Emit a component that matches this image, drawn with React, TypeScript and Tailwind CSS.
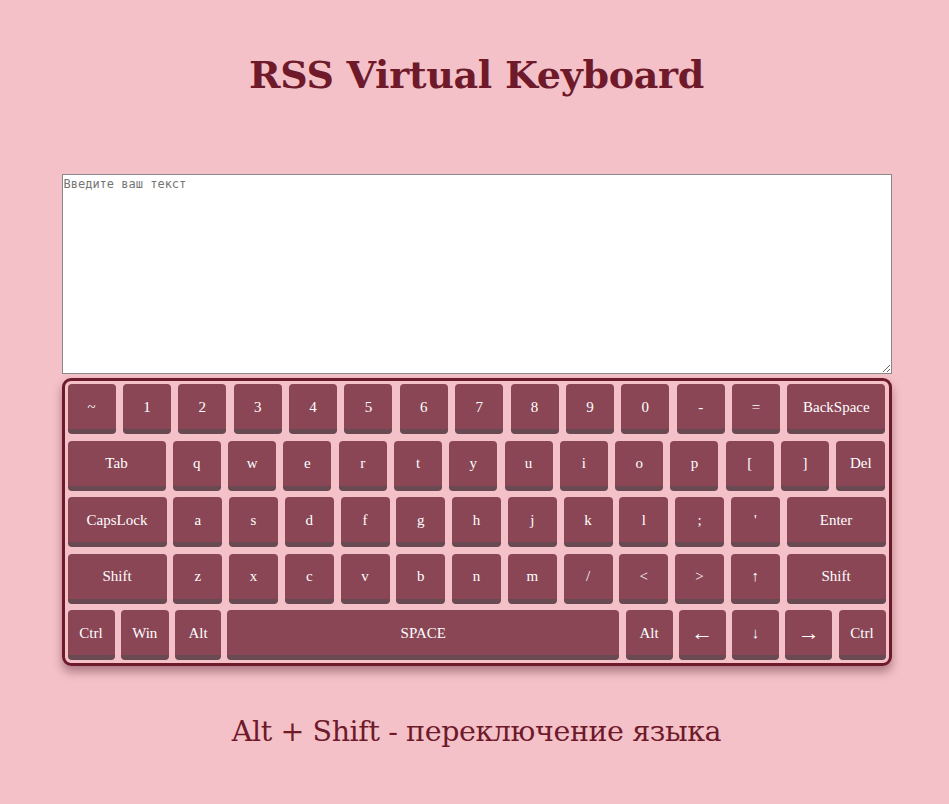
import React from 'react';

type K = { label: string; w: number };

const k = (label: string, w = 48): K => ({ label, w });

const rows: K[][] = [
  [k('~'), k('1'), k('2'), k('3'), k('4'), k('5'), k('6'), k('7'), k('8'), k('9'), k('0'), k('-'), k('='), k('BackSpace', 98)],
  [k('Tab', 98), k('q'), k('w'), k('e'), k('r'), k('t'), k('y'), k('u'), k('i'), k('o'), k('p'), k('['), k(']'), k('Del', 49)],
  [k('CapsLock', 99), k('a', 49), k('s', 49), k('d', 49), k('f', 49), k('g', 49), k('h', 49), k('j', 49), k('k', 49), k('l', 49), k(';', 49), k("'", 49), k('Enter', 99)],
  [k('Shift', 99), k('z', 49), k('x', 49), k('c', 49), k('v', 49), k('b', 49), k('n', 49), k('m', 49), k('/', 49), k('<', 49), k('>', 49), k('↑', 49), k('Shift', 99)],
  [k('Ctrl', 47), k('Win', 48), k('Alt', 46), k('SPACE', 392), k('Alt', 47), k('←', 47), k('↓', 47), k('→', 47), k('Ctrl', 47)],
];

function Key({ item }: { item: K }) {
  const wide = item.label === '←' || item.label === '→';
  return (
    <button
      style={{ width: item.w }}
      className={`h-[50px] shrink-0 rounded-[4px] bg-[#8a4655] border-b-[5px] border-[#6a4a52] text-white leading-none flex items-center justify-center pt-[1px] ${wide ? 'text-[22px]' : 'text-[15px]'}`}
    >
      {item.label}
    </button>
  );
}

export default function App() {
  return (
    <div className="min-h-[804px] bg-[#f5c1c8] font-['Liberation_Serif',serif] flex flex-col items-center pl-[4px]">
      <h1 className="mt-[52px] text-[38px] leading-[46px] font-bold text-[#6e1a2a] font-['DejaVu_Serif','Liberation_Serif',serif] tracking-[-0.3px]">
        RSS Virtual Keyboard
      </h1>

      {/* text input */}
      <textarea
        placeholder="Введите ваш текст"
        className="mt-[76px] w-[830px] h-[200px] bg-white border border-[#888] px-[1px] py-[2px] text-[12px] leading-[14px] font-['DejaVu_Sans_Mono',monospace] placeholder:text-[#757575] block"
      />

      {/* keyboard */}
      <div className="mt-[4px] w-[830px] rounded-[9px] border-[3px] border-[#6d1a2a] p-[3px] flex flex-col gap-[6.5px] shadow-[0_6px_10px_rgba(90,40,50,0.45)]">
        {rows.map((row, i) => (
          <div key={i} className="flex justify-between">
            {row.map((item, j) => (
              <Key key={j} item={item} />
            ))}
          </div>
        ))}
      </div>

      <p className="mt-[48px] text-[28.5px] leading-[36px] text-[#6e1a2a] font-['DejaVu_Serif','Liberation_Serif',serif] tracking-[-0.4px]">
        Alt + Shift - переключение языка
      </p>
    </div>
  );
}
